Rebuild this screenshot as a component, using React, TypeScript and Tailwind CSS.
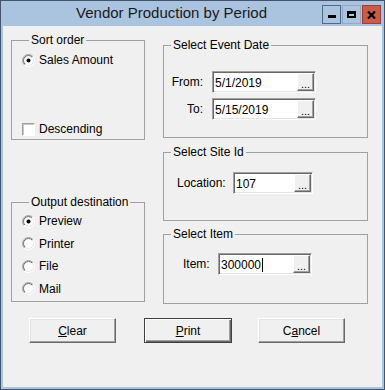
import type { ReactNode } from 'react'

function Radio({ checked }: { checked?: boolean }) {
  return (
    <svg width="13" height="13" viewBox="0 0 13 13" className="shrink-0">
      <defs>
        <linearGradient id="rOuter" x1="0" y1="0" x2="1" y2="1">
          <stop offset="0.5" stopColor="#a0a0a0" />
          <stop offset="0.5" stopColor="#ffffff" />
        </linearGradient>
        <linearGradient id="rInner" x1="0" y1="0" x2="1" y2="1">
          <stop offset="0.5" stopColor="#696969" />
          <stop offset="0.5" stopColor="#e3e3e3" />
        </linearGradient>
      </defs>
      <circle cx="6.5" cy="6.5" r="6" fill="#ffffff" stroke="url(#rOuter)" strokeWidth="1" />
      <circle cx="6.5" cy="6.5" r="5" fill="#ffffff" stroke="url(#rInner)" strokeWidth="1" />
      {checked && <circle cx="6.5" cy="6.5" r="2" fill="#000000" />}
    </svg>
  )
}

function Option({ label, checked }: { label: string; checked?: boolean }) {
  return (
    <div className="flex h-[16px] items-center gap-[4px]">
      <Radio checked={checked} />
      <span>{label}</span>
    </div>
  )
}

function Group({ title, className, children }: { title: string; className: string; children: ReactNode }) {
  return (
    <fieldset className={`border border-[#a0a0a0] ${className}`}>
      <legend className="ml-[7px] px-[2px] text-[12px] leading-[14px]">{title}</legend>
      {children}
    </fieldset>
  )
}

function TextBox({ value, width, caret }: { value: string; width: string; caret?: boolean }) {
  return (
    <div
      className={`flex h-[22px] ${width} border border-b-white border-l-[#a0a0a0] border-r-white border-t-[#a0a0a0] bg-white shadow-[inset_1px_1px_0_#696969,inset_-1px_-1px_0_#e3e3e3]`}
    >
      <div className="flex flex-1 items-center pl-[2px] pt-[1px] leading-none">
        <span>{value}</span>
        {caret && <span className="ml-px h-[14px] w-px bg-black" />}
      </div>
      <div className="my-[1px] mr-[1px] flex w-[17px] items-end justify-center border border-b-[#696969] border-l-white border-r-[#696969] border-t-white bg-[#f0f0f0] pb-[1px] text-[11px] leading-[10px] shadow-[inset_-1px_-1px_0_#a0a0a0]">
        ...
      </div>
    </div>
  )
}

function Btn({ children, isDefault }: { children: ReactNode; isDefault?: boolean }) {
  return (
    <div
      className={
        isDefault
          ? 'flex h-[25px] w-[88px] items-center justify-center border border-[#404040] bg-[#f0f0f0] shadow-[inset_1px_1px_0_#ffffff,inset_-1px_-1px_0_#696969,inset_-2px_-2px_0_#a0a0a0]'
          : 'flex h-[25px] w-[87px] items-center justify-center border border-b-[#696969] border-l-white border-r-[#696969] border-t-white bg-[#f0f0f0] shadow-[inset_-1px_-1px_0_#a0a0a0,inset_1px_1px_0_#e3e3e3]'
      }
    >
      {children}
    </div>
  )
}

export default function App() {
  return (
    <div className="flex h-[390px] w-[385px] flex-col border border-[#44556b] bg-[#aac3de] font-['Liberation_Sans',Arial,sans-serif] text-[12px] text-black">
      {/* title bar */}
      <div className="flex h-[25px] shrink-0 items-start pr-[3px]">
        <div className="flex-1 pl-[20px] pt-[3px] text-center text-[15px] leading-[18px] text-[#1a1a1a]">
          Vendor Production by Period
        </div>
        <div className="mt-[4px] flex gap-[1px]">
          <div className="flex h-[19px] w-[19px] items-end justify-center border border-[#4f6987] pb-[5px]">
            <div className="h-[3px] w-[8px] bg-black" />
          </div>
          <div className="flex h-[19px] w-[19px] items-center justify-center border border-[#8ea8c6]">
            <div className="h-[7px] w-[9px] border-2 border-t-[3px] border-black" />
          </div>
          <div className="flex h-[19px] w-[19px] items-center justify-center border border-[#9b4032] bg-[#c95b48]">
            <svg width="9" height="8" viewBox="0 0 9 8">
              <path d="M1 0.5 L8 7.5 M8 0.5 L1 7.5" stroke="#000" strokeWidth="2.2" />
            </svg>
          </div>
        </div>
      </div>

      {/* client area */}
      <div className="mx-[2px] mb-[2px] flex flex-1 flex-col bg-[#f0f0f0]">
        <div className="flex items-start">
          <div className="ml-[8px] mt-[7px] flex w-[134px] flex-col gap-[55px]">
            <Group title="Sort order" className="h-[107px] pl-[10px]">
              <div className="mt-[5px]">
                <Option label="Sales Amount" checked />
              </div>
              <div className="mt-[53px] flex h-[16px] items-center gap-[4px]">
                <span className="h-[13px] w-[13px] border border-b-white border-l-[#a0a0a0] border-r-white border-t-[#a0a0a0] bg-white shadow-[inset_1px_1px_0_#c8c8c8]" />
                <span>Descending</span>
              </div>
            </Group>
            <Group title="Output destination" className="h-[107px] pl-[10px]">
              <div className="mt-[4px] flex flex-col gap-[6.5px]">
                <Option label="Preview" checked />
                <Option label="Printer" />
                <Option label="File" />
                <Option label="Mail" />
              </div>
            </Group>
          </div>

          <div className="ml-[18px] mt-[12px] flex w-[205px] flex-col">
            <Group title="Select Event Date" className="h-[100px]">
              <div className="mt-[19px] flex flex-col gap-[5px]">
                <div className="flex items-center gap-[9px]">
                  <span className="w-[39px] text-right">From:</span>
                  <TextBox value="5/1/2019" width="w-[104px]" />
                </div>
                <div className="flex items-center gap-[9px]">
                  <span className="w-[39px] text-right">To:</span>
                  <TextBox value="5/15/2019" width="w-[104px]" />
                </div>
              </div>
            </Group>
            <Group title="Select Site Id" className="mt-[7px] h-[76px]">
              <div className="mt-[13px] flex items-center gap-[6px] pl-[13px]">
                <span className="w-[50px]">Location:</span>
                <TextBox value="107" width="w-[80px]" />
              </div>
            </Group>
            <Group title="Select Item" className="mt-[6px] h-[77px]">
              <div className="mt-[12px] flex items-center gap-[9px] pl-[19px]">
                <span className="w-[26px]">Item:</span>
                <TextBox value="300000" width="w-[94px]" caret />
              </div>
            </Group>
          </div>
        </div>

        <div className="ml-[26px] mt-[14px] flex">
          <Btn>
            <span className="underline">C</span>lear
          </Btn>
          <div className="ml-[28px]">
            <Btn isDefault>
              <span className="underline">P</span>rint
            </Btn>
          </div>
          <div className="ml-[26px]">
            <Btn>
              C<span className="underline">a</span>ncel
            </Btn>
          </div>
        </div>
      </div>
    </div>
  )
}
